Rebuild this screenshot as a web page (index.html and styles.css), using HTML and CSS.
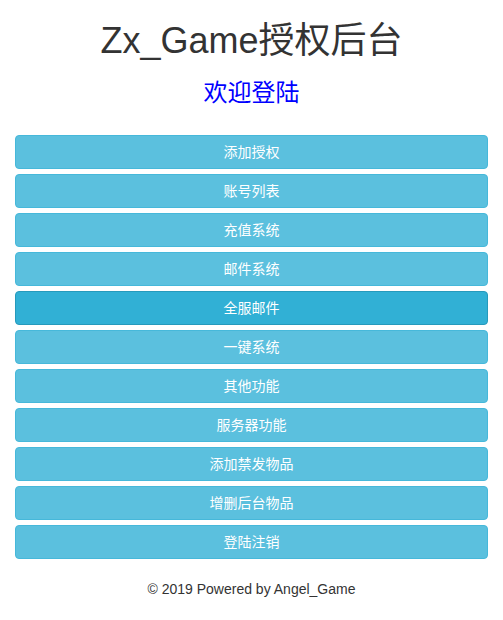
FILE: index.html
```html
<!DOCTYPE html>
<html lang="zh-CN">
<head>
<meta charset="utf-8">
<title>Zx_Game授权后台</title>
<link rel="stylesheet" href="styles.css">
</head>
<body>
<div class="container">
  <h1 class="title">Zx_Game授权后台</h1>
  <h3 class="welcome">欢迎登陆</h3>
  <div class="menu">
    <a class="btn">添加授权</a>
    <a class="btn">账号列表</a>
    <a class="btn">充值系统</a>
    <a class="btn">邮件系统</a>
    <a class="btn active">全服邮件</a>
    <a class="btn">一键系统</a>
    <a class="btn">其他功能</a>
    <a class="btn">服务器功能</a>
    <a class="btn">添加禁发物品</a>
    <a class="btn">增删后台物品</a>
    <a class="btn">登陆注销</a>
  </div>
  <p class="footer">© 2019 Powered by Angel_Game</p>
</div>
</body>
</html>
```

FILE: styles.css
```css
html, body {
  margin: 0;
  padding: 0;
  background: #fff;
}
body {
  font-family: "Liberation Sans", "Noto Sans CJK SC", Arial, sans-serif;
  font-size: 14px;
  line-height: 20px;
  color: #333;
}
.container {
  padding: 0 15px;
}
.title {
  margin: 21px 0 9px;
  font-size: 36px;
  font-weight: 400;
  line-height: 39.6px;
  text-align: center;
  color: #333;
}
.welcome {
  margin: 19px 0 29px;
  font-size: 24px;
  font-weight: 400;
  line-height: 26.4px;
  text-align: center;
  color: #0000ff;
}
.menu {
  display: flex;
  flex-direction: column;
  gap: 5px;
}
.btn {
  display: block;
  box-sizing: border-box;
  height: 34px;
  padding: 6px 12px;
  border: 1px solid #46b8da;
  border-radius: 4px;
  background: #5bc0de;
  color: #fff;
  font-size: 14px;
  line-height: 20px;
  text-align: center;
  cursor: pointer;
}
.btn.active {
  background: #31b0d5;
  border-color: #269abc;
}
.footer {
  margin: 20px 0 0;
  text-align: center;
  font-size: 14px;
  line-height: 20px;
  color: #333;
}
```
